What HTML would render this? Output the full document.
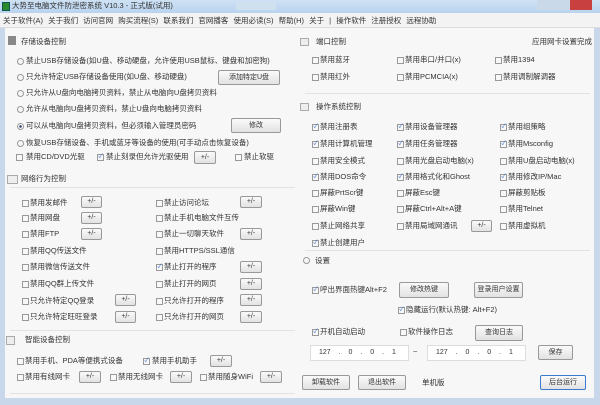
<!DOCTYPE html><html><head><meta charset="utf-8"><style>
*{margin:0;padding:0;box-sizing:border-box}
body{width:600px;height:405px;overflow:hidden;background:#fff;font-family:"Liberation Sans","Noto Sans CJK SC",sans-serif;font-size:7.5px;color:#333;position:relative}
.a{position:absolute;white-space:nowrap;line-height:10px}
.c{position:absolute;width:7px;height:7px;border:1px solid #999;background:#f8f8f8;font-size:6px;line-height:5px;text-align:center;color:#36c}
.r{position:absolute;width:7px;height:7px;border:1px solid #999;border-radius:50%;background:#f8f8f8}
.b{position:absolute;border:1px solid #999;border-radius:2px;background:linear-gradient(#fafafa,#e2e2e2);text-align:center;font-size:7px;line-height:13px;height:15px}
.s{position:absolute;width:11px;height:9px;border:1px solid #aaa;background:#eee}
.ip{position:absolute;background:#fff;border:1px solid #ddd;height:16px;font-size:7px;line-height:14px;padding-left:8px;word-spacing:6px}
</style></head><body>
<div class="a" style="left:0;top:0;width:600px;height:13px;background:linear-gradient(#cfe2f5,#b9d3ee)"></div>
<div class="a" style="left:2px;top:2px;width:8px;height:9px;background:#2a8a2a;border:1px solid #155"></div>
<div class="a" style="left:12px;top:1px">大势至电脑文件防泄密系统 V10.3 - 正式版(试用)</div>
<div class="a" style="left:236px;top:2px;width:40px;height:8px;background:#cfe0ef"></div>
<div class="a" style="left:537px;top:0;width:55px;height:10px;background:linear-gradient(90deg,#c9d9ea 0,#c9d9ea 60%,#c84040 60%)"></div>
<div class="a" style="left:0;top:13px;width:600px;height:15px;background:#f3f3f3;border-bottom:1px solid #ddd"></div>
<div class="a" style="left:3px;top:16px;word-spacing:3px">关于软件(A) 关于我们 访问官网 购买流程(S) 联系我们 官网播客 使用必读(S) 帮助(H) 关于 | 操作软件 注册授权 远程协助</div>
<div class="a" style="left:0;top:28px;width:5px;height:377px;background:#c8d8ea"></div>
<div class="a" style="left:594px;top:28px;width:6px;height:377px;background:#c8d8ea"></div>
<div class="a" style="left:0;top:398px;width:600px;height:7px;background:#c8d8ea"></div>
<div class="a" style="left:5px;top:28px;width:589px;height:370px;background:#f7f7f7"></div>
<div class="a" style="left:10px;top:187px;width:285px;height:1px;background:#e2e2e2"></div>
<div class="a" style="left:10px;top:330px;width:285px;height:1px;background:#e2e2e2"></div>
<div class="a" style="left:10px;top:393px;width:285px;height:1px;background:#e2e2e2"></div>
<div class="a" style="left:305px;top:93px;width:285px;height:1px;background:#e2e2e2"></div>
<div class="a" style="left:305px;top:250px;width:285px;height:1px;background:#e2e2e2"></div>
<div class="a" style="left:8px;top:36px;width:8px;height:9px;background:#888"></div>
<div class="a" style="left:21px;top:37px">存储设备控制</div>
<div class="r" style="left:17px;top:58px"></div><div class="a" style="left:26px;top:56px">禁止USB存储设备(如U盘、移动硬盘，允许使用USB鼠标、键盘和加密狗)</div>
<div class="r" style="left:17px;top:74px"></div><div class="a" style="left:26px;top:72px">只允许特定USB存储设备使用(如U盘、移动硬盘)</div>
<div class="r" style="left:17px;top:90px"></div><div class="a" style="left:26px;top:88px">只允许从U盘向电脑拷贝资料，禁止从电脑向U盘拷贝资料</div>
<div class="r" style="left:17px;top:106px"></div><div class="a" style="left:26px;top:104px">允许从电脑向U盘拷贝资料，禁止U盘向电脑拷贝资料</div>
<div class="r" style="left:17px;top:123px;background:radial-gradient(#236 30%,#f8f8f8 40%)"></div><div class="a" style="left:26px;top:121px">可以从电脑向U盘拷贝资料，但必须输入管理员密码</div>
<div class="r" style="left:17px;top:140px"></div><div class="a" style="left:26px;top:138px">恢复USB存储设备、手机或蓝牙等设备的使用(可手动点击恢复设备)</div>
<div class="b" style="left:218px;top:70px;width:62px">添加特定U盘</div>
<div class="b" style="left:231px;top:118px;width:50px">修改</div>
<div class="c" style="left:16px;top:154px"></div><div class="a" style="left:26px;top:152px">禁用CD/DVD光驱</div>
<div class="c" style="left:97px;top:154px">✓</div><div class="a" style="left:106px;top:152px">禁止刻录但允许光驱使用</div>
<div class="b" style="left:194px;top:151px;width:22px;height:13px;line-height:11px">+/-</div>
<div class="c" style="left:235px;top:154px"></div><div class="a" style="left:244px;top:152px">禁止软驱</div>
<div class="s" style="left:7px;top:175px"></div><div class="a" style="left:21px;top:174px">网络行为控制</div>

<div class="c" style="left:22px;top:200px"></div><div class="a" style="left:30px;top:198px">禁用发邮件</div><div class="b" style="left:81px;top:196px;width:21px;height:12px;line-height:10px">+/-</div>
<div class="c" style="left:22px;top:215px"></div><div class="a" style="left:30px;top:213px">禁用网盘</div><div class="b" style="left:81px;top:212px;width:21px;height:12px;line-height:10px">+/-</div>
<div class="c" style="left:22px;top:231px"></div><div class="a" style="left:30px;top:229px">禁用FTP</div><div class="b" style="left:81px;top:228px;width:21px;height:12px;line-height:10px">+/-</div>
<div class="c" style="left:22px;top:248px"></div><div class="a" style="left:30px;top:246px">禁用QQ传送文件</div>
<div class="c" style="left:22px;top:264px"></div><div class="a" style="left:30px;top:262px">禁用微信传送文件</div>
<div class="c" style="left:22px;top:281px"></div><div class="a" style="left:30px;top:279px">禁用QQ群上传文件</div>
<div class="c" style="left:22px;top:298px"></div><div class="a" style="left:30px;top:296px">只允许特定QQ登录</div><div class="b" style="left:115px;top:294px;width:21px;height:12px;line-height:10px">+/-</div>
<div class="c" style="left:22px;top:314px"></div><div class="a" style="left:30px;top:312px">只允许特定旺旺登录</div><div class="b" style="left:115px;top:311px;width:21px;height:12px;line-height:10px">+/-</div>

<div class="c" style="left:156px;top:200px"></div><div class="a" style="left:164px;top:198px">禁止访问论坛</div><div class="b" style="left:240px;top:196px;width:22px;height:12px;line-height:10px">+/-</div>
<div class="c" style="left:156px;top:215px"></div><div class="a" style="left:164px;top:213px">禁止手机电脑文件互传</div>
<div class="c" style="left:156px;top:231px"></div><div class="a" style="left:164px;top:229px">禁止一切聊天软件</div><div class="b" style="left:240px;top:228px;width:22px;height:12px;line-height:10px">+/-</div>
<div class="c" style="left:156px;top:248px"></div><div class="a" style="left:164px;top:246px">禁用HTTPS/SSL通信</div>
<div class="c" style="left:156px;top:264px">✓</div><div class="a" style="left:164px;top:262px">禁止打开的程序</div><div class="b" style="left:240px;top:261px;width:22px;height:12px;line-height:10px">+/-</div>
<div class="c" style="left:156px;top:281px"></div><div class="a" style="left:164px;top:279px">禁止打开的网页</div><div class="b" style="left:240px;top:278px;width:22px;height:12px;line-height:10px">+/-</div>
<div class="c" style="left:156px;top:298px"></div><div class="a" style="left:164px;top:296px">只允许打开的程序</div><div class="b" style="left:240px;top:294px;width:22px;height:12px;line-height:10px">+/-</div>
<div class="c" style="left:156px;top:314px"></div><div class="a" style="left:164px;top:312px">只允许打开的网页</div><div class="b" style="left:240px;top:311px;width:22px;height:12px;line-height:10px">+/-</div>

<div class="s" style="left:6px;top:336px;width:9px"></div><div class="a" style="left:25px;top:335px">智能设备控制</div>
<div class="c" style="left:17px;top:358px"></div><div class="a" style="left:25px;top:356px">禁用手机、PDA等便携式设备</div>
<div class="c" style="left:143px;top:358px">✓</div><div class="a" style="left:152px;top:356px">禁用手机助手</div><div class="b" style="left:210px;top:355px;width:22px;height:12px;line-height:10px">+/-</div>
<div class="c" style="left:17px;top:374px"></div><div class="a" style="left:25px;top:372px">禁用有线网卡</div><div class="b" style="left:79px;top:371px;width:22px;height:12px;line-height:10px">+/-</div>
<div class="c" style="left:110px;top:374px"></div><div class="a" style="left:118px;top:372px">禁用无线网卡</div><div class="b" style="left:170px;top:371px;width:22px;height:12px;line-height:10px">+/-</div>
<div class="c" style="left:200px;top:374px"></div><div class="a" style="left:208px;top:372px">禁用随身WiFi</div><div class="b" style="left:260px;top:371px;width:22px;height:12px;line-height:10px">+/-</div>

<div class="s" style="left:300px;top:38px;width:9px;height:8px"></div><div class="a" style="left:316px;top:37px">端口控制</div>
<div class="a" style="left:532px;top:37px">应用网卡设置完成</div>
<div class="c" style="left:312px;top:57px"></div><div class="a" style="left:320px;top:55px">禁用蓝牙</div>
<div class="c" style="left:397px;top:57px"></div><div class="a" style="left:405px;top:55px">禁用串口/并口(x)</div>
<div class="c" style="left:495px;top:57px"></div><div class="a" style="left:503px;top:55px">禁用1394</div>
<div class="c" style="left:312px;top:74px"></div><div class="a" style="left:320px;top:72px">禁用红外</div>
<div class="c" style="left:397px;top:74px"></div><div class="a" style="left:405px;top:72px">禁用PCMCIA(x)</div>
<div class="c" style="left:495px;top:74px"></div><div class="a" style="left:503px;top:72px">禁用调制解调器</div>
<div class="s" style="left:300px;top:103px;width:9px;height:8px"></div><div class="a" style="left:316px;top:102px">操作系统控制</div>

<div class="c" style="left:312px;top:124px">✓</div><div class="a" style="left:320px;top:122px">禁用注册表</div>
<div class="c" style="left:397px;top:124px">✓</div><div class="a" style="left:405px;top:122px">禁用设备管理器</div>
<div class="c" style="left:500px;top:124px">✓</div><div class="a" style="left:508px;top:122px">禁用组策略</div>
<div class="c" style="left:312px;top:141px">✓</div><div class="a" style="left:320px;top:139px">禁用计算机管理</div>
<div class="c" style="left:397px;top:141px">✓</div><div class="a" style="left:405px;top:139px">禁用任务管理器</div>
<div class="c" style="left:500px;top:141px">✓</div><div class="a" style="left:508px;top:139px">禁用Msconfig</div>
<div class="c" style="left:312px;top:158px"></div><div class="a" style="left:320px;top:156px">禁用安全模式</div>
<div class="c" style="left:397px;top:158px"></div><div class="a" style="left:405px;top:156px">禁用光盘启动电脑(x)</div>
<div class="c" style="left:500px;top:158px"></div><div class="a" style="left:508px;top:156px">禁用U盘启动电脑(x)</div>
<div class="c" style="left:312px;top:174px">✓</div><div class="a" style="left:320px;top:172px">禁用DOS命令</div>
<div class="c" style="left:397px;top:174px">✓</div><div class="a" style="left:405px;top:172px">禁用格式化和Ghost</div>
<div class="c" style="left:500px;top:174px">✓</div><div class="a" style="left:508px;top:172px">禁用修改IP/Mac</div>
<div class="c" style="left:312px;top:190px"></div><div class="a" style="left:320px;top:188px">屏蔽PrtScr键</div>
<div class="c" style="left:397px;top:190px"></div><div class="a" style="left:405px;top:188px">屏蔽Esc键</div>
<div class="c" style="left:500px;top:190px"></div><div class="a" style="left:508px;top:188px">屏蔽剪贴板</div>
<div class="c" style="left:312px;top:206px"></div><div class="a" style="left:320px;top:204px">屏蔽Win键</div>
<div class="c" style="left:397px;top:206px"></div><div class="a" style="left:405px;top:204px">屏蔽Ctrl+Alt+A键</div>
<div class="c" style="left:500px;top:206px"></div><div class="a" style="left:508px;top:204px">禁用Telnet</div>
<div class="c" style="left:312px;top:223px"></div><div class="a" style="left:320px;top:221px">禁止网络共享</div>
<div class="c" style="left:397px;top:223px"></div><div class="a" style="left:405px;top:221px">禁用局域网通讯</div>
<div class="b" style="left:471px;top:220px;width:21px;height:12px;line-height:10px">+/-</div>
<div class="c" style="left:500px;top:223px"></div><div class="a" style="left:508px;top:221px">禁用虚拟机</div>
<div class="c" style="left:312px;top:240px">✓</div><div class="a" style="left:320px;top:238px">禁止创建用户</div>

<div class="r" style="left:303px;top:257px"></div><div class="a" style="left:315px;top:256px">设置</div>
<div class="c" style="left:312px;top:287px">✓</div><div class="a" style="left:320px;top:285px">呼出界面热键Alt+F2</div>
<div class="b" style="left:399px;top:282px;width:50px;height:16px;line-height:14px">修改热键</div>
<div class="b" style="left:474px;top:282px;width:49px;height:16px;line-height:14px">登录用户设置</div>
<div class="c" style="left:398px;top:307px">✓</div><div class="a" style="left:406px;top:305px">隐藏运行(默认热键: Alt+F2)</div>
<div class="c" style="left:312px;top:329px">✓</div><div class="a" style="left:320px;top:327px">开机自动启动</div>
<div class="c" style="left:400px;top:329px"></div><div class="a" style="left:408px;top:327px">软件操作日志</div>
<div class="b" style="left:475px;top:325px;width:48px;height:16px;line-height:14px">查询日志</div>
<div class="ip" style="left:310px;top:345px;width:99px">127 . 0 . 0 . 1</div>
<div class="a" style="left:413px;top:347px">~</div>
<div class="ip" style="left:427px;top:345px;width:99px">127 . 0 . 0 . 1</div>
<div class="b" style="left:538px;top:345px;width:35px">保存</div>
<div class="b" style="left:302px;top:375px;width:48px;height:15px">卸载软件</div>
<div class="b" style="left:358px;top:375px;width:48px;height:15px">退出软件</div>
<div class="a" style="left:422px;top:378px">单机版</div>
<div class="b" style="left:540px;top:375px;width:46px;height:15px;border-color:#3a7bd0">后台运行</div>
</body></html>
